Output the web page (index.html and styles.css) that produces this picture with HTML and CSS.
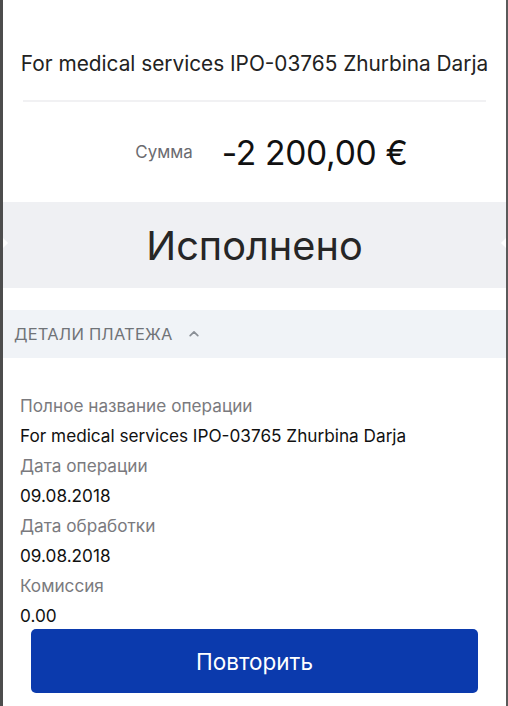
FILE: index.html
```
<!DOCTYPE html>
<html lang="ru">
<head>
<meta charset="utf-8">
<link rel="stylesheet" href="styles.css">
</head>
<body>
<div class="screen">
  <div class="title">For medical services IPO-03765 Zhurbina Darja</div>
  <div class="divider"></div>
  <div class="sum">
    <span class="sum-label">Сумма</span>
    <span class="sum-value">-2 200,00 €</span>
  </div>
  <div class="status">Исполнено</div>
  <div class="details-head">
    <span>ДЕТАЛИ ПЛАТЕЖА</span>
    <svg class="chev" width="10" height="7" viewBox="0 0 10 7"><path d="M1.2 5.6 L5 1.8 L8.8 5.6" fill="none" stroke="#8a8f96" stroke-width="1.7" stroke-linecap="round" stroke-linejoin="round"/></svg>
  </div>
  <div class="details">
    <div class="label">Полное название операции</div>
    <div class="value">For medical services IPO-03765 Zhurbina Darja</div>
    <div class="label">Дата операции</div>
    <div class="value">09.08.2018</div>
    <div class="label">Дата обработки</div>
    <div class="value">09.08.2018</div>
    <div class="label">Комиссия</div>
    <div class="value">0.00</div>
  </div>
  <div class="btn-wrap"><div class="btn">Повторить</div></div>
</div>
</body>
</html>
```

FILE: styles.css
```
* { box-sizing: border-box; }
html, body { margin: 0; padding: 0; background: #fff; }
body { font-family: "Inter", "Liberation Sans", sans-serif; color: #1c1c1e; }
.screen {
  width: 508px;
  height: 706px;
  border-left: 3px solid #4d4d4d;
  border-right: 2px solid #5a5a5a;
  background: #fff;
  overflow: hidden;
  display: flex;
  flex-direction: column;
}
.title {
  padding-top: 51px;
  height: 90px;
  text-align: center;
  font-size: 20.8px;
  line-height: 26px;
  color: #222;
  font-weight: 380;
}
.divider {
  margin: 10px 20px 0 20px;
  height: 2px;
  background: #f1f1f3;
}
.sum {
  height: 100px;
  display: flex;
  align-items: center;
  justify-content: center;
  gap: 29px;
  padding-left: 34px;
}
.sum-label { font-size: 16.9px; color: #6b6b70; }
.sum-value { font-size: 33.6px; color: #111; letter-spacing: -0.3px; }
.status {
  position: relative;
  height: 86px;
  background: #eff0f3;
  display: flex;
  align-items: center;
  justify-content: center;
  font-size: 39.7px;
  color: #262626;
  padding-top: 2px;
}
.status::before, .status::after {
  content: "";
  position: absolute;
  top: 36px;
  width: 10px;
  height: 10px;
  background: #fff;
  transform: rotate(45deg);
}
.status::before { left: -7px; }
.status::after { right: -7px; }
.details-head {
  margin-top: 22px;
  height: 48px;
  background: #f0f3f7;
  display: flex;
  align-items: center;
  gap: 16px;
  padding-left: 11px;
  font-size: 16.5px;
  color: #707378;
  letter-spacing: 0.2px;
}
.chev { margin-top: -2px; }
.details {
  padding: 33px 0 0 17px;
  display: flex;
  flex-direction: column;
}
.label { font-size: 17.2px; line-height: 30px; color: #7a7a7e; }
.value { font-size: 17.2px; line-height: 30px; color: #111; }
.btn-wrap { padding: 0 28px; margin-top: -2px; }
.btn {
  height: 64px;
  background: #0b3aad;
  border-radius: 5px;
  display: flex;
  align-items: center;
  justify-content: center;
  color: #fff;
  font-size: 22.5px;
  padding-top: 1px;
}
```
